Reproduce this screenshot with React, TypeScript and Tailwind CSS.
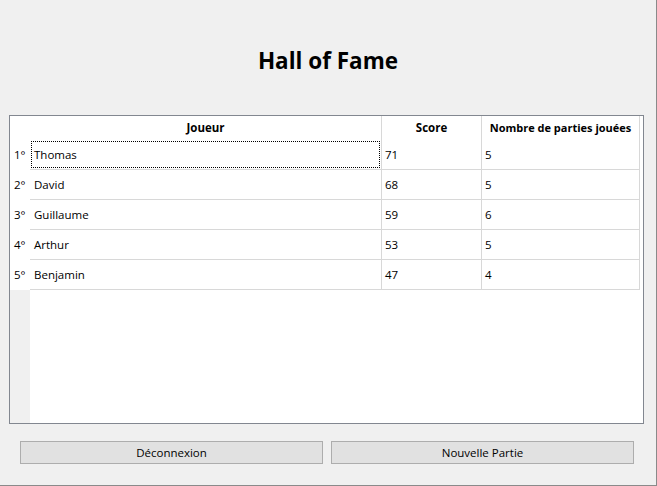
const players = [
  { rank: "1°", name: "Thomas", score: 71, games: 5 },
  { rank: "2°", name: "David", score: 68, games: 5 },
  { rank: "3°", name: "Guillaume", score: 59, games: 6 },
  { rank: "4°", name: "Arthur", score: 53, games: 5 },
  { rank: "5°", name: "Benjamin", score: 47, games: 4 },
]

const App = () => {
  return (
    <div
      className="w-[657px] h-[486px] bg-[#f0f0f0] border-r border-b border-[#8a8a8a] text-black text-[11.5px] flex flex-col"
      style={{ fontFamily: '"Open Sans", "Noto Sans", sans-serif' }}
    >
      {/* TITLE */}
      <h1 className="text-center font-bold text-[22.5px] leading-[32px] pt-[45px] pb-[38px]">
        Hall of Fame
      </h1>

      {/* TABLE */}
      <div className="ml-[9px] w-[635px] h-[309px] border border-[#828790] bg-white flex flex-col">
        {/* HEADER */}
        <div className="flex h-[24px] font-bold">
          <div className="w-[20px]" />
          <div className="w-[352px] border-r border-[#d8d8d8] flex items-center justify-center">Joueur</div>
          <div className="w-[100px] border-r border-[#d8d8d8] flex items-center justify-center">Score</div>
          <div className="w-[158px] border-r border-[#d8d8d8] flex items-center justify-center text-[11px]">Nombre de parties jouées</div>
        </div>

        {/* ROWS */}
        {players.map((p, i) => (
          <div key={p.rank} className="flex h-[30px]">
            <div className="w-[20px] flex items-center pl-[4px]">{p.rank}</div>
            <div className="w-[352px] border-r border-b border-[#d8d8d8] flex items-center p-[1px]">
              <div
                className={
                  "w-full h-full flex items-center pl-[2px] " +
                  (i === 0 ? "border border-dotted border-black" : "border border-transparent")
                }
              >
                {p.name}
              </div>
            </div>
            <div className="w-[100px] border-r border-b border-[#d8d8d8] flex items-center pl-[3px]">{p.score}</div>
            <div className="w-[158px] border-r border-b border-[#d8d8d8] flex items-center pl-[3px]">{p.games}</div>
          </div>
        ))}

        {/* EMPTY AREA */}
        <div className="flex flex-1">
          <div className="w-[20px] bg-[#f0f0f0]" />
        </div>
      </div>

      {/* ACTIONS */}
      <div className="flex gap-[8px] ml-[20px] mt-[17px]">
        <button className="w-[303px] h-[23px] bg-[#e1e1e1] border border-[#adadad] text-[11.5px]">Déconnexion</button>
        <button className="w-[303px] h-[23px] bg-[#e1e1e1] border border-[#adadad] text-[11.5px]">Nouvelle Partie</button>
      </div>
    </div>
  )
}

export default App
